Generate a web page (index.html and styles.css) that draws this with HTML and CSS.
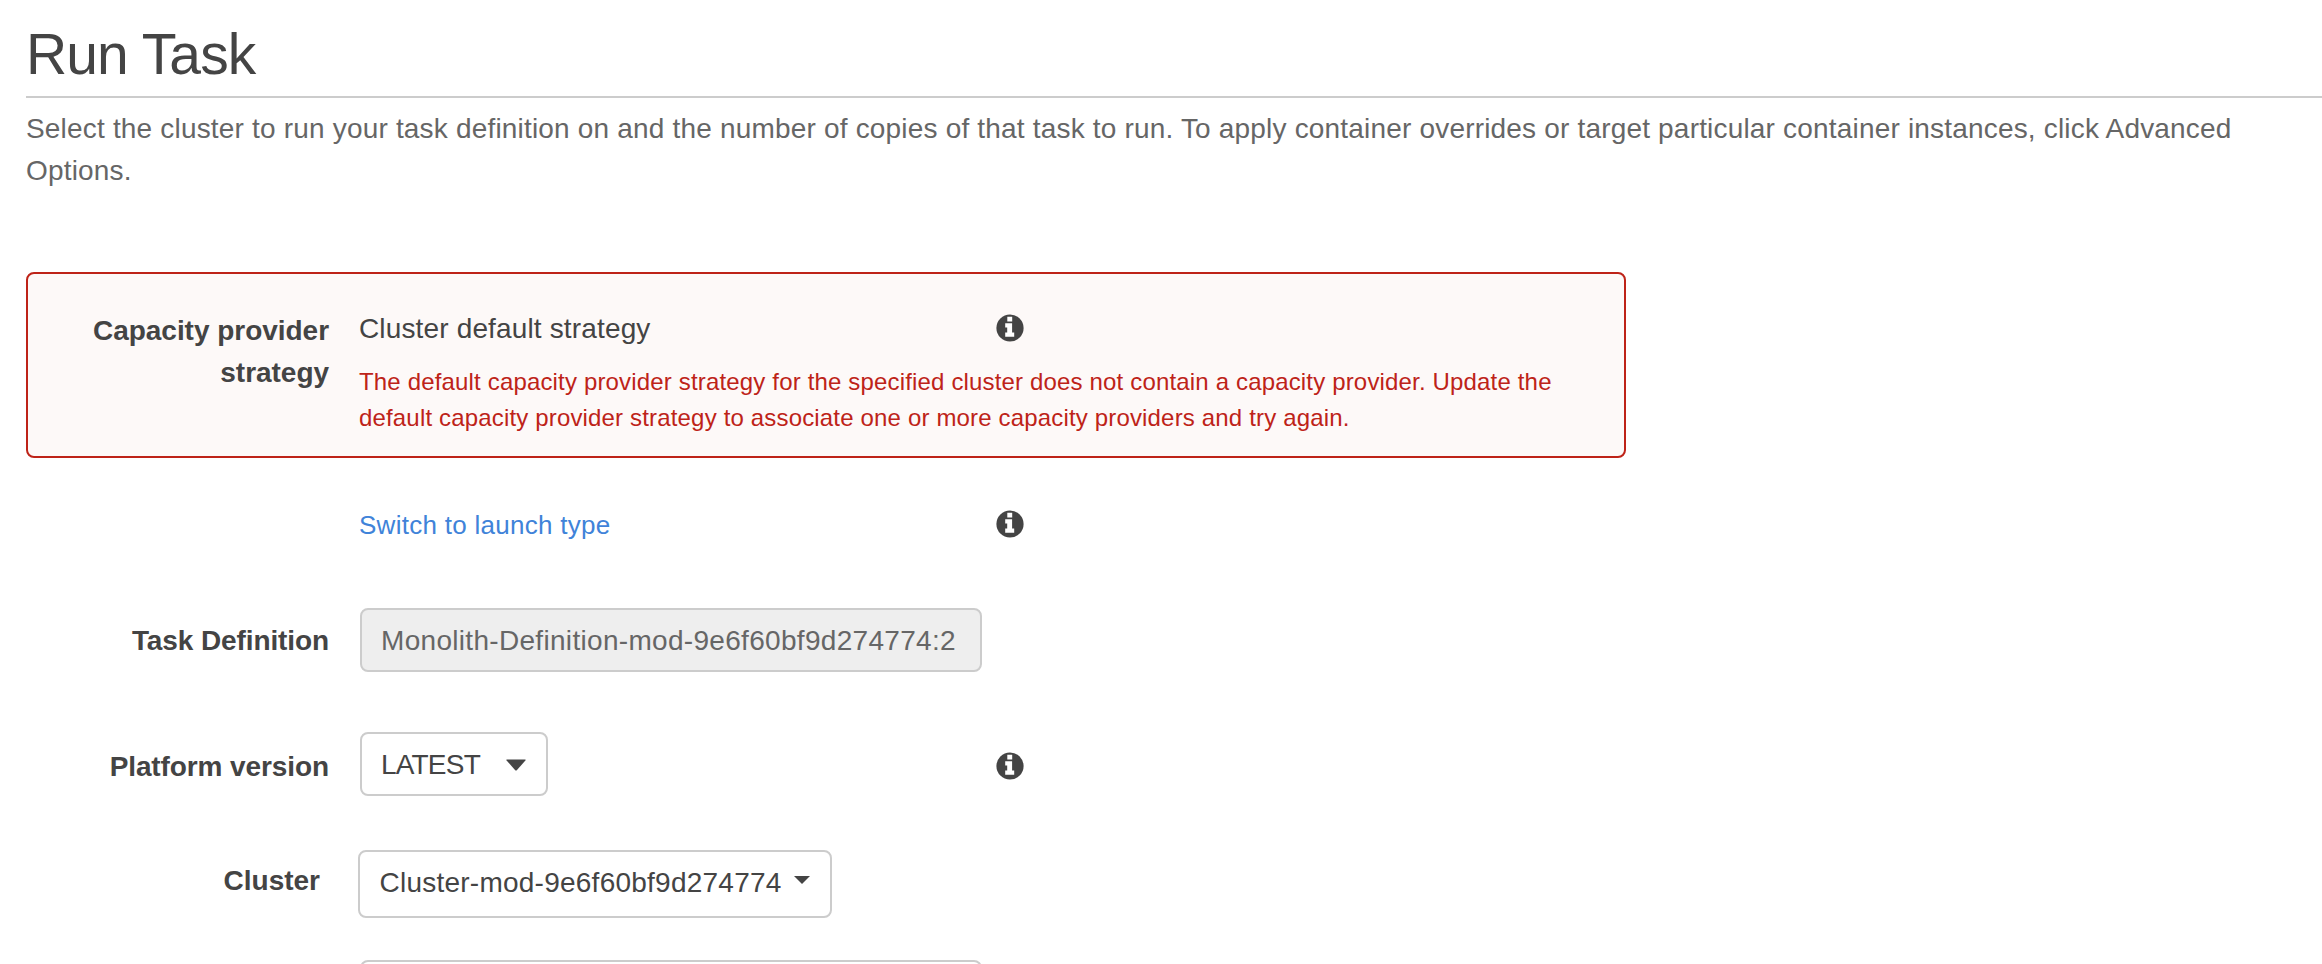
FILE: index.html
```html
<!DOCTYPE html>
<html lang="en">
<head>
<meta charset="utf-8">
<title>Run Task</title>
<link rel="stylesheet" href="styles.css">
</head>
<body>
<svg class="sprite" aria-hidden="true">
  <symbol id="info" viewBox="0 0 28 28">
    <circle cx="14" cy="14" r="13.600"/>
    <path class="cut" d="M11.300 2.800h4.900v4.600h-4.900zM9.200 9.300h6.900v9.200h2.100v4.300h-9v-4.300h2v-5.100h-2z"/>
  </symbol>
</svg>
<main class="page">
  <h1 class="title">Run Task</h1>
  <p class="intro">Select the cluster to run your task definition on and the number of copies of that task to run. To apply container overrides or target particular container instances, click Advanced<br>Options.</p>

  <form class="form">
    <section class="row alert">
      <div class="label">Capacity provider<br>strategy</div>
      <div class="field">
        <div class="line">
          <span class="value">Cluster default strategy</span>
          <svg class="info"><use href="#info"/></svg>
        </div>
        <p class="error">The default capacity provider strategy for the specified cluster does not contain a capacity provider. Update the<br>default capacity provider strategy to associate one or more capacity providers and try again.</p>
      </div>
    </section>

    <div class="row switch">
      <div class="label"></div>
      <a class="value link">Switch to launch type</a>
      <svg class="info"><use href="#info"/></svg>
    </div>

    <div class="row task">
      <div class="label">Task Definition</div>
      <div class="input disabled">Monolith-Definition-mod-9e6f60bf9d274774:2</div>
    </div>

    <div class="row platform">
      <div class="label">Platform version</div>
      <div class="value">
        <div class="select">LATEST<svg class="arrow" viewBox="0 0 20 12"><path d="M1 .5h18q1.200 0 .4 1L11 11q-1 1-2 0L.6 1.500Q-.2.500 1 .5z"/></svg></div>
      </div>
      <svg class="info"><use href="#info"/></svg>
    </div>

    <div class="row cluster">
      <div class="label">Cluster</div>
      <div class="button">Cluster-mod-9e6f60bf9d274774<svg class="caret" viewBox="0 0 16 8"><path d="M0 0h16L8 8z"/></svg></div>
    </div>

    <div class="row next">
      <div class="label"></div>
      <div class="input"></div>
    </div>
  </form>
</main>
</body>
</html>
```
FILE: styles.css
```css
* { box-sizing: border-box; }
body {
  margin: 0;
  background: #fff;
  color: #444;
  font: 28px/42px "Liberation Sans", Arial, sans-serif;
}
.sprite { display: none; }
.page { height: 964px; overflow: hidden; padding-left: 26px; }
.title {
  margin: 0;
  height: 98px;
  padding-top: 22px;
  border-bottom: 2px solid #ccc;
  font-size: 57px;
  line-height: 64px;
  font-weight: 400;
  letter-spacing: -0.9px;
}
.intro { margin: 10px 0 0; color: #666; white-space: nowrap; letter-spacing: 0.184px; }
.form { margin-top: 80px; width: 1600px; }
.row { display: flex; }
.label {
  width: 303px;
  margin-right: 30px;
  flex: none;
  text-align: right;
  font-weight: 700;
  letter-spacing: -0.1px;
}
.value { width: 637px; flex: none; letter-spacing: 0.15px; }
.info { width: 28px; height: 28px; flex: none; fill: #444; }
.cut { fill: #fff; }
.line { display: flex; align-items: flex-start; }
.line .info { margin-top: 6px; }
.alert {
  height: 186px;
  border: 2px solid #be2318;
  border-radius: 8px;
  background: #fdf9f8;
  padding-top: 34px;
}
.alert .label { width: 301px; padding-top: 2px; letter-spacing: -0.03px; }
.error {
  margin: 14px 0 0;
  color: #be2318;
  font-size: 24px;
  line-height: 36px;
  white-space: nowrap;
  letter-spacing: 0.165px;
}
.switch { margin-top: 45px; align-items: center; height: 42px; }
.link { padding-top: 2px; color: #4083d9; font-size: 26px; letter-spacing: 0.28px; }
.task { margin-top: 63px; }
.task .label { padding-top: 12px; }
.input {
  width: 622px;
  height: 64px;
  margin-left: 1px;
  padding: 10px 19px;
  border: 2px solid #ccc;
  border-radius: 8px;
  white-space: nowrap;
  letter-spacing: 0.31px;
}
.disabled { background: #eee; color: #666; }
.platform { margin-top: 60px; }
.platform .label { padding-top: 14px; }
.platform .info { margin-top: 20px; }
.select {
  display: flex;
  align-items: flex-start;
  justify-content: space-between;
  width: 188px;
  height: 64px;
  margin-left: 1px;
  padding: 10px 20px 10px 19px;
  border: 2px solid #ccc;
  border-radius: 8px;
  letter-spacing: -0.8px;
}
.arrow { width: 20px; height: 12px; margin-top: 15px; fill: #444; }
.cluster { margin-top: 54px; }
.cluster .label { width: 294px; margin-right: 38px; padding-top: 10px; letter-spacing: 0; }
.button {
  display: flex;
  justify-content: space-between;
  width: 474px;
  height: 68px;
  padding: 10px 20px 10px 19.500px;
  border: 2px solid #ccc;
  border-radius: 8px;
  letter-spacing: 0.24px;
}
.caret { width: 16px; height: 8px; margin-top: 14px; fill: #444; }
.next { margin-top: 42px; }
```
